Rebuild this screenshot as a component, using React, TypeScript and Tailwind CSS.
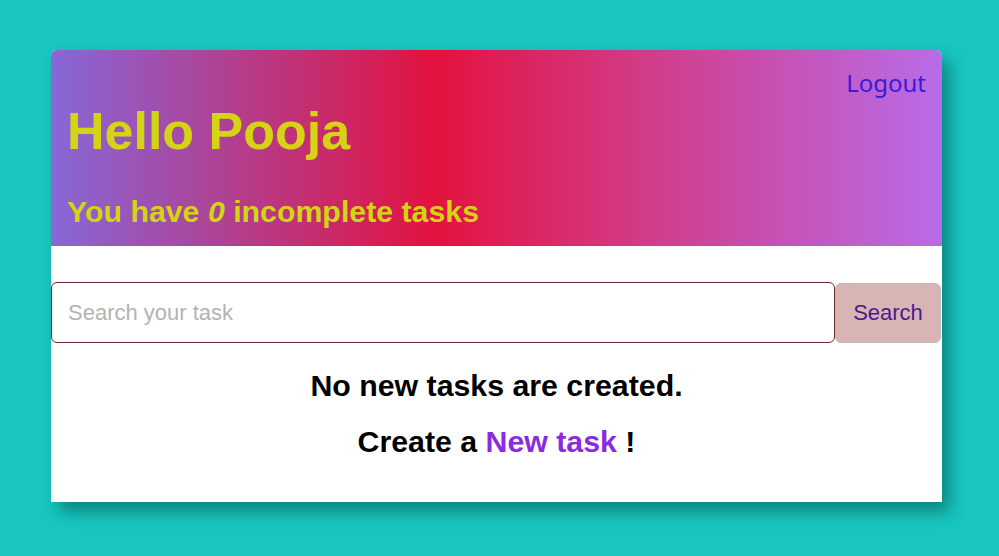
export default function App() {
  return (
    <div className="min-h-[556px] w-full bg-[#18c6bf] pt-[50px] pl-[51px]" style={{ fontFamily: '"Liberation Sans", Arial, sans-serif' }}>
      <div className="w-[891px] h-[452px] bg-white rounded-t-[6px] shadow-[8px_10px_16px_rgba(0,60,60,0.45)] flex flex-col">
        <div className="h-[196px] rounded-t-[6px] bg-[linear-gradient(90deg,#8668d8_0%,#e3123f_43%,#d13e8c_68%,#b86ce8_100%)] flex flex-col pt-[17px] px-[16px] pb-[16px]">
          <div className="flex justify-end">
            <a className="text-[24px] leading-[32px] text-[#3a1ad6] cursor-pointer" style={{ fontFamily: '"Noto Sans", sans-serif' }}>Logout</a>
          </div>
          <h1 className="mt-[2px] text-[52px] leading-[60px] font-bold text-[#d4d414]">Hello Pooja</h1>
          <p className="mt-[33px] text-[30.3px] leading-[36px] font-bold text-[#d4d414]">
            You have <i>0</i> incomplete tasks
          </p>
        </div>
        <div className="mt-[36px] flex">
          <input
            className="w-[784px] h-[61px] border border-[#6e2a2a] rounded-[6px] pl-[16px] text-[22px] outline-none placeholder:text-[#b3b3b3]"
            placeholder="Search your task"
          />
          <button className="w-[106px] h-[60px] mt-[0.5px] bg-[#d8b4b4] border border-[#bdbdbd] rounded-[6px] text-[22px] text-[#4a1a8c]">Search</button>
        </div>
        <h2 className="mt-[25px] text-center text-[30.3px] leading-[36px] font-bold text-black">No new tasks are created.</h2>
        <h2 className="mt-[20px] text-center text-[30.3px] leading-[36px] font-bold text-black">
          Create a <a className="text-[#8a2be2] cursor-pointer">New task</a> !
        </h2>
      </div>
    </div>
  );
}
